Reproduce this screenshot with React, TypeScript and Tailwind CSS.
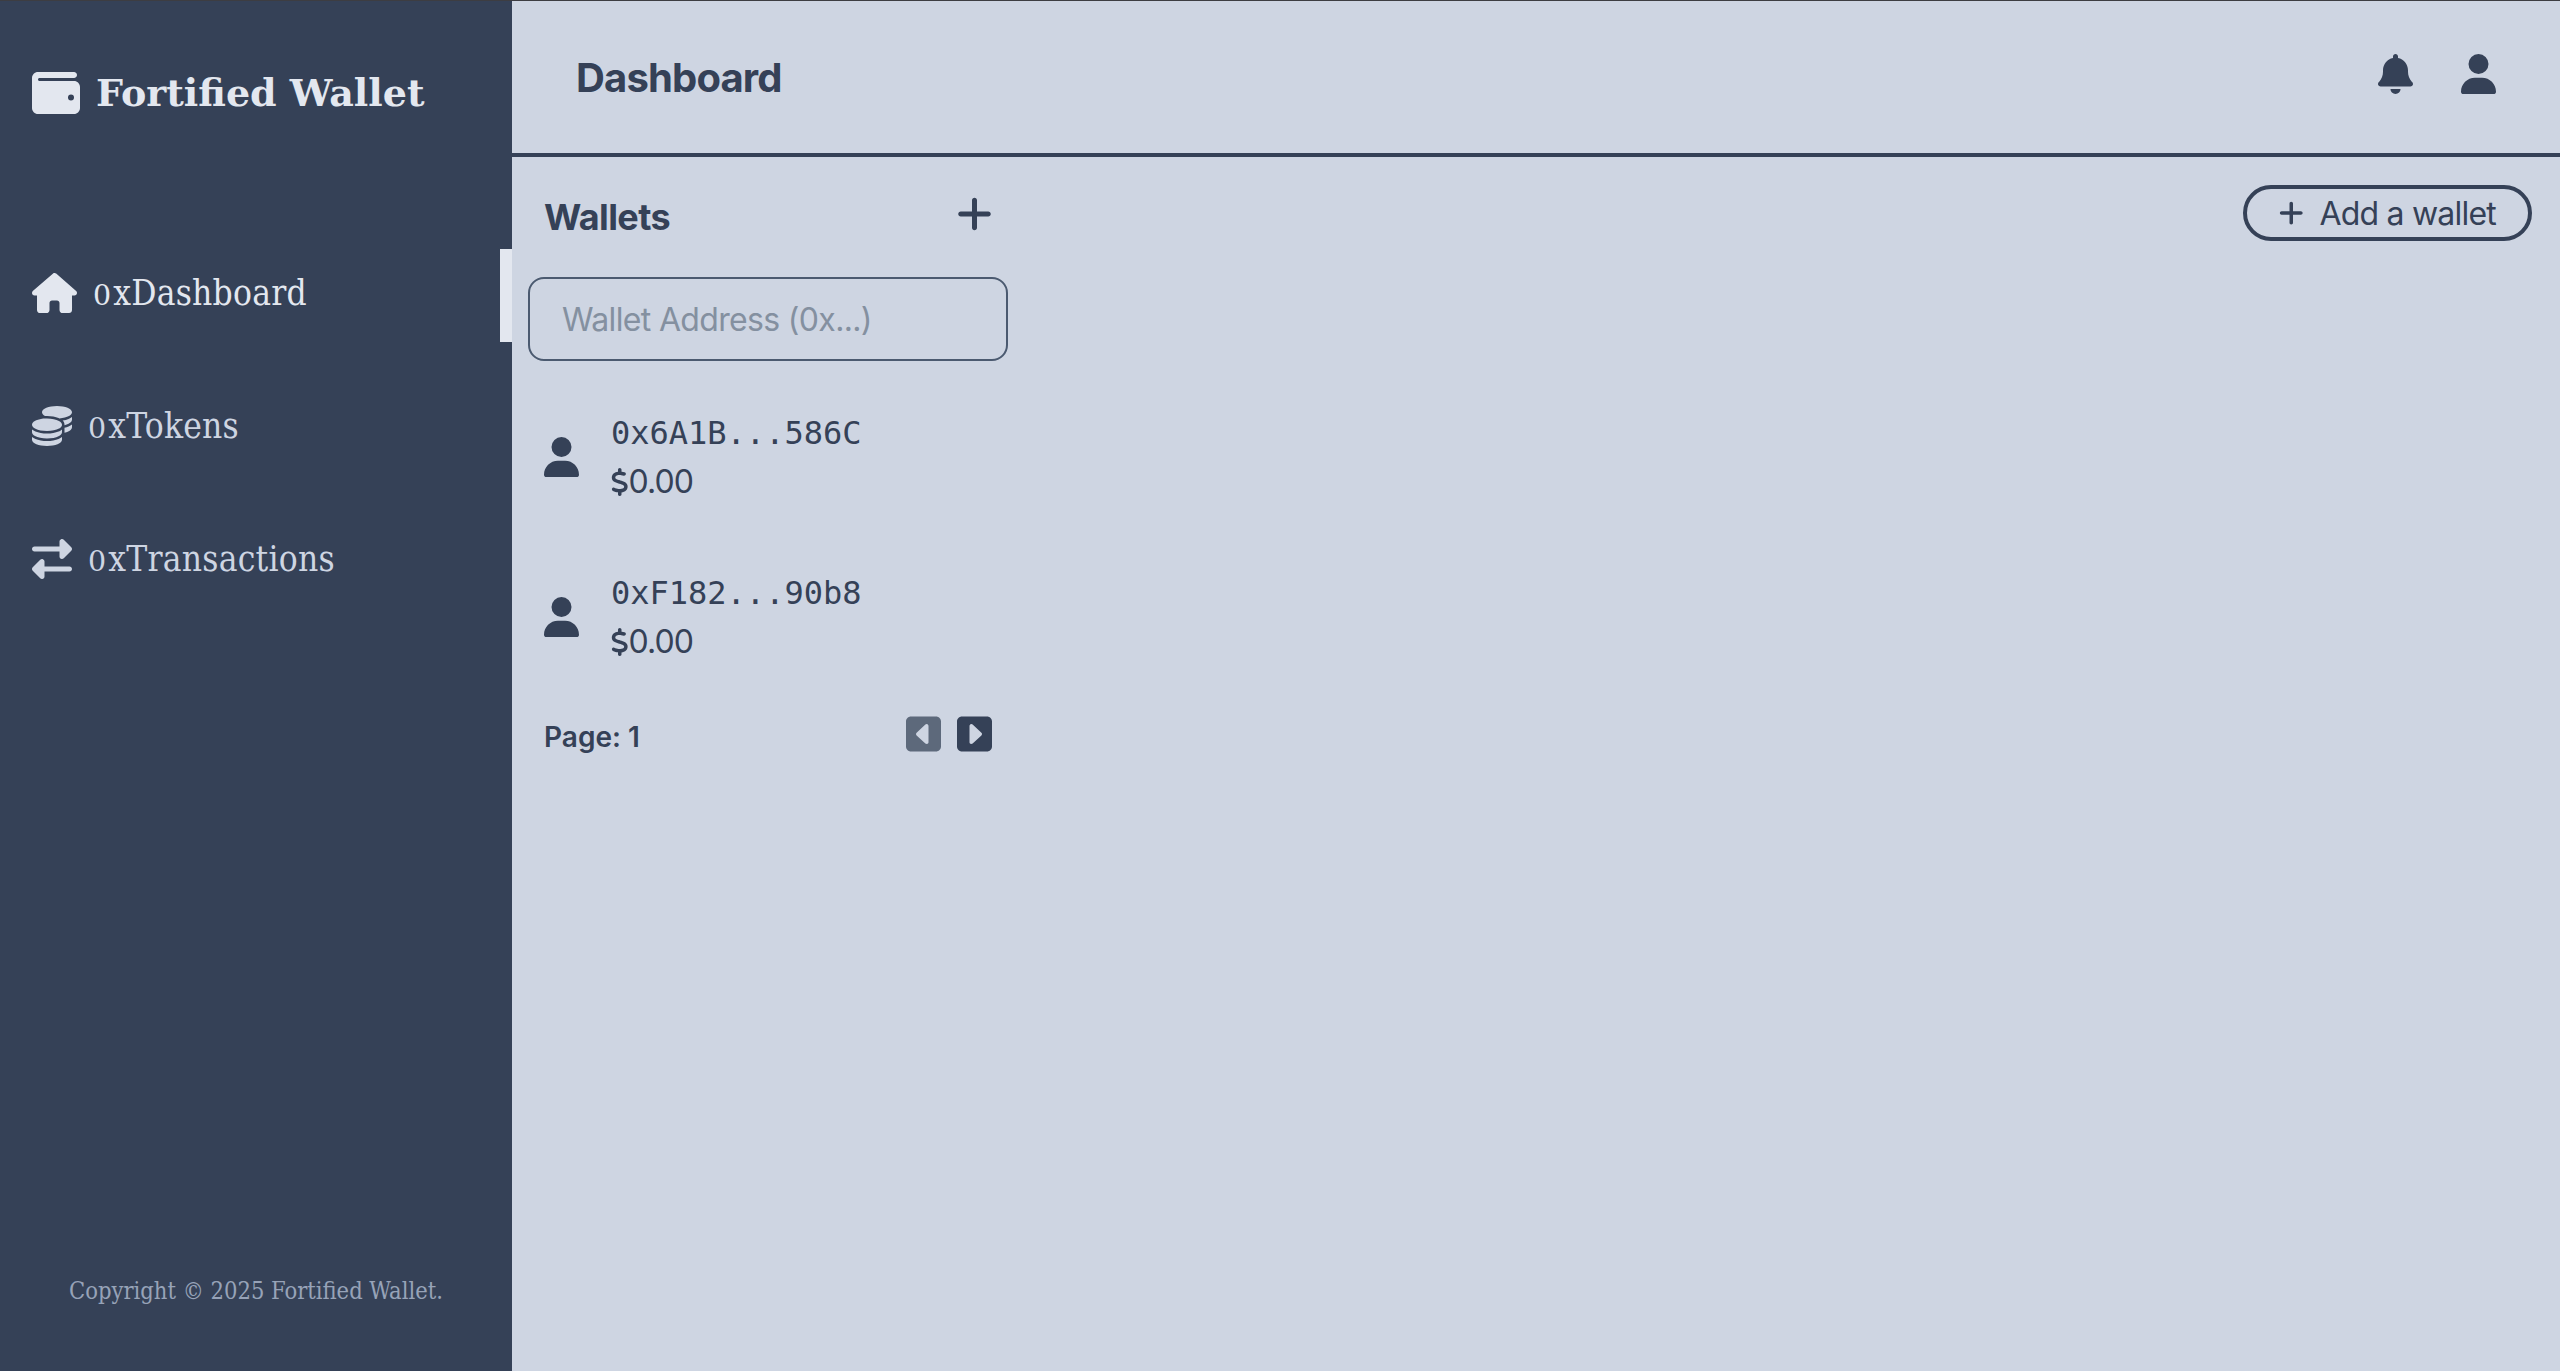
import React from "react";
import {
  FaBell,
  FaCoins,
  FaDollarSign,
  FaHouse,
  FaPlus,
  FaRightLeft,
  FaSquareCaretLeft,
  FaSquareCaretRight,
  FaUser,
  FaWallet,
} from "react-icons/fa6";

function Icon({ as: As, className }: { as: React.ElementType; className: string }) {
  return <As className={`shrink-0 ${className}`} />;
}

function NavItem({
  icon,
  iconClass,
  label,
  active,
}: {
  icon: React.ElementType;
  iconClass: string;
  label: string;
  active?: boolean;
}) {
  return (
    <li
      className={`flex h-[93px] items-center gap-4 pb-[5px] pl-8 ${
        active ? "border-r-[12px] border-[#e3e7ef] text-[#e3e7ef]" : "text-[#ced5e2]"
      }`}
    >
      <Icon as={icon} className={iconClass} />
      <span className="text-[35px] leading-[56px] tracking-[0.25px] whitespace-nowrap">
        {/* Old-style zero: sits at x-height */}
        <span className="font-['DejaVu_Serif',serif] text-[28.5px] leading-none tracking-[2px] [font-stretch:normal]">0</span>
        {label}
      </span>
    </li>
  );
}

function WalletRow({ address }: { address: string }) {
  return (
    <li className="flex h-[160px] items-center gap-8 px-4">
      <Icon as={FaUser} className="h-10 w-[35px]" />
      <div className="flex flex-col">
        <span className="font-['DejaVu_Sans_Mono',monospace] text-[32px] leading-[48px]">{address}</span>
        <span className="flex h-12 items-center pt-[2px] text-[32px] leading-[48px]">
          <Icon as={FaDollarSign} className="h-7 w-[17.5px]" />
          <span className="tracking-[-0.9px]">0.00</span>
        </span>
      </div>
    </li>
  );
}

export default function App() {
  return (
    <div className="flex h-[1371px] w-[2560px] overflow-hidden border-t border-[#3d3d42] bg-[#ced5e2] font-[Inter,sans-serif] text-[#354157]">
      <aside className="flex w-[512px] shrink-0 flex-col bg-[#354157] font-['DejaVu_Serif_Condensed','DejaVu_Serif',serif] [font-stretch:condensed]">
        <div className="mt-[62px] flex h-[60px] items-center gap-4 pl-8 text-[#e3e7ef]">
          <Icon as={FaWallet} className="size-12" />
          <h1 className="font-['DejaVu_Serif',serif] text-[38px] leading-[60px] font-bold whitespace-nowrap [font-stretch:normal]">
            Fortified Wallet
          </h1>
        </div>
        <ul className="mt-[126px] flex flex-col gap-10">
          <NavItem icon={FaHouse} iconClass="h-10 w-[45px]" label="xDashboard" active />
          <NavItem icon={FaCoins} iconClass="size-10" label="xTokens" />
          <NavItem icon={FaRightLeft} iconClass="size-10" label="xTransactions" />
        </ul>
        <p className="mt-auto mb-[62px] text-center text-[23.5px] leading-[36px] whitespace-nowrap text-[#97a3b8]">
          Copyright © 2025 Fortified Wallet.
        </p>
      </aside>

      <div className="flex flex-1 flex-col">
        <header className="flex h-[156px] items-center justify-between border-b-4 border-[#354157] px-16">
          <h2 className="pt-0.5 text-[40px] leading-[60px] font-bold tracking-[-0.85px]">Dashboard</h2>
          <div className="mb-1.5 flex items-center gap-12">
            <Icon as={FaBell} className="h-10 w-[35px]" />
            <Icon as={FaUser} className="h-10 w-[35px]" />
          </div>
        </header>

        <main className="flex flex-1 items-start justify-between">
          <section className="flex w-[512px] flex-col px-4">
            <div className="mt-[27px] flex h-[60px] items-center justify-between px-4">
              <h3 className="pt-[5px] text-[36px] leading-[60px] font-bold tracking-[-0.6px]">Wallets</h3>
              <Icon as={FaPlus} className="h-10 w-[35px]" />
            </div>
            <input
              className="mt-[33px] h-[84px] rounded-2xl border-2 border-[#4b5a70] px-8 text-[32px] tracking-[-0.66px] placeholder:text-[#8490a0]"
              placeholder="Wallet Address (0x...)"
            />
            <ul className="mt-4 flex flex-col">
              <WalletRow address="0x6A1B...586C" />
              <WalletRow address="0xF182...90b8" />
            </ul>
            <div className="mt-[7px] flex h-[60px] items-center justify-between px-4">
              <span className="pt-[5px] text-[28px] font-semibold">Page: 1</span>
              <div className="flex gap-4">
                <Icon as={FaSquareCaretLeft} className="h-10 w-[35px] text-[#5d697b]" />
                <Icon as={FaSquareCaretRight} className="h-10 w-[35px]" />
              </div>
            </div>
          </section>
          <button className="mt-7 mr-7 flex h-14 w-[289px] items-center gap-4 rounded-full border-4 border-[#354157] pl-8 text-[32px] tracking-[-0.8px] whitespace-nowrap">
            <Icon as={FaPlus} className="h-7 w-[24.5px]" />
            <span className="pt-0.5">Add a wallet</span>
          </button>
        </main>
      </div>
    </div>
  );
}
